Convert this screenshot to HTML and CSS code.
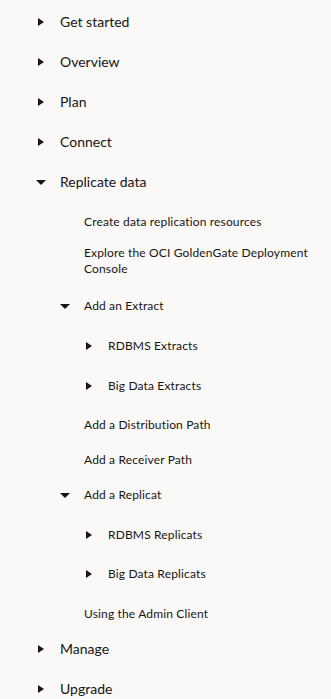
FILE: index.html
```html
<!DOCTYPE html>
<html lang="en">
<head>
<meta charset="utf-8">
<title>Table of contents</title>
<link rel="stylesheet" href="styles.css">
</head>
<body>
<nav class="toc">
  <ul class="list">
    <li><a class="row l1 h40" href="#"><span class="caret right"></span><span class="label">Get started</span></a></li>
    <li><a class="row l1 h40" href="#"><span class="caret right"></span><span class="label">Overview</span></a></li>
    <li><a class="row l1 h40" href="#"><span class="caret right"></span><span class="label">Plan</span></a></li>
    <li><a class="row l1 h40" href="#"><span class="caret right"></span><span class="label">Connect</span></a></li>
    <li>
      <a class="row l1 h40" href="#"><span class="caret down"></span><span class="label">Replicate data</span></a>
      <ul class="list sub">
        <li><a class="row l2 leaf h31" href="#"><span class="label">Create data replication resources</span></a></li>
        <li><a class="row l2 leaf h53" href="#"><span class="label">Explore the OCI GoldenGate Deployment Console</span></a></li>
        <li>
          <a class="row l2 h40" href="#"><span class="caret down"></span><span class="label">Add an Extract</span></a>
          <ul class="list">
            <li><a class="row l3 h40" href="#"><span class="caret right"></span><span class="label">RDBMS Extracts</span></a></li>
            <li><a class="row l3 h39" href="#"><span class="caret right"></span><span class="label">Big Data Extracts</span></a></li>
          </ul>
        </li>
        <li><a class="row l2 leaf h35" href="#"><span class="label">Add a Distribution Path</span></a></li>
        <li><a class="row l2 leaf h35" href="#"><span class="label">Add a Receiver Path</span></a></li>
        <li>
          <a class="row l2 h40" href="#"><span class="caret down"></span><span class="label">Add a Replicat</span></a>
          <ul class="list">
            <li><a class="row l3 h39" href="#"><span class="caret right"></span><span class="label">RDBMS Replicats</span></a></li>
            <li><a class="row l3 h40" href="#"><span class="caret right"></span><span class="label">Big Data Replicats</span></a></li>
          </ul>
        </li>
        <li><a class="row l2 leaf h33" href="#"><span class="label">Using the Admin Client</span></a></li>
      </ul>
    </li>
    <li><a class="row l1 h40" href="#"><span class="caret right"></span><span class="label">Manage</span></a></li>
    <li><a class="row l1 h40" href="#"><span class="caret right"></span><span class="label">Upgrade</span></a></li>
  </ul>
</nav>
</body>
</html>
```
FILE: styles.css
```css
html, body {
  margin: 0;
  padding: 0;
  background: #fbf9f8;
}

body {
  font-family: Lato, "Liberation Sans", sans-serif;
  color: #161513;
  padding-top: 2px;
}

.list {
  list-style: none;
  margin: 0;
  padding: 0;
}

.sub {
  margin-top: 2px;
}

.row {
  display: flex;
  align-items: flex-start;
  box-sizing: border-box;
  padding-top: 10px;
  padding-right: 16px;
  color: #161513;
  text-decoration: none;
}

.l1 {
  font-size: 14px;
  line-height: 20px;
  padding-left: 36px;
}

.l2 {
  font-size: 12px;
  line-height: 16px;
  letter-spacing: 0.15px;
  padding-left: 60px;
}

.l3 {
  font-size: 12px;
  line-height: 16px;
  letter-spacing: 0.15px;
  padding-left: 84px;
}

.l2.leaf {
  padding-left: 84px;
}

.h31 { height: 31px; }
.h33 { height: 33px; }
.h35 { height: 35px; }
.h39 { height: 39px; }
.h40 { height: 40px; }
.h53 { height: 53px; }

.caret {
  flex: none;
  width: 10px;
  margin-right: 14px;
}

.caret::before {
  content: "";
  display: block;
  width: 0;
  height: 0;
}

.caret.right::before {
  margin-left: 2px;
  border-left: 6px solid #1c1111;
  border-top: 4.5px solid transparent;
  border-bottom: 4.5px solid transparent;
}

.caret.down::before {
  border-top: 5px solid #161513;
  border-left: 5px solid transparent;
  border-right: 5px solid transparent;
}

.l1 .caret.right { margin-top: 6px; }
.l1 .caret.down { margin-top: 8px; }
.l2 .caret.down { margin-top: 6px; }
.l3 .caret.right { margin-top: 4px; }

.label {
  min-width: 0;
}
```
